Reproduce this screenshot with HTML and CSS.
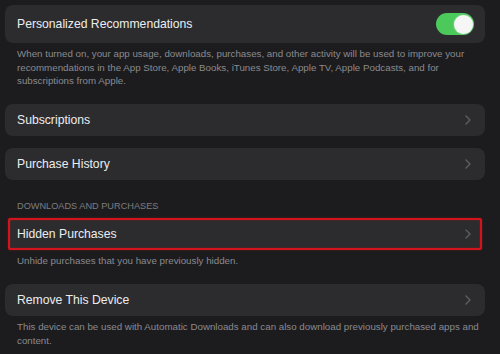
FILE: index.html
```html
<!DOCTYPE html>
<html>
<head>
<meta charset="utf-8">
<link rel="stylesheet" href="styles.css">
</head>
<body>
<div class="page">
  <div class="card tall">
    <span class="label">Personalized Recommendations</span>
    <span class="toggle"><span class="knob"></span></span>
  </div>
  <p class="footer">When turned on, your app usage, downloads, purchases, and other activity will be used to improve your recommendations in the App Store, Apple Books, iTunes Store, Apple TV, Apple Podcasts, and for subscriptions from Apple.</p>

  <div class="card gap-lg">
    <span class="label">Subscriptions</span>
    <svg class="chev" viewBox="0 0 6 10" width="6" height="10"><path d="M1 1l4 4-4 4" fill="none" stroke="currentColor" stroke-width="1.4" stroke-linecap="round" stroke-linejoin="round"/></svg>
  </div>

  <div class="card gap-md">
    <span class="label">Purchase History</span>
    <svg class="chev" viewBox="0 0 6 10" width="6" height="10"><path d="M1 1l4 4-4 4" fill="none" stroke="currentColor" stroke-width="1.4" stroke-linecap="round" stroke-linejoin="round"/></svg>
  </div>

  <p class="header">DOWNLOADS AND PURCHASES</p>
  <div class="card highlight">
    <span class="label">Hidden Purchases</span>
    <svg class="chev" viewBox="0 0 6 10" width="6" height="10"><path d="M1 1l4 4-4 4" fill="none" stroke="currentColor" stroke-width="1.4" stroke-linecap="round" stroke-linejoin="round"/></svg>
  </div>
  <p class="footer">Unhide purchases that you have previously hidden.</p>

  <div class="card gap-lg2">
    <span class="label">Remove This Device</span>
    <svg class="chev" viewBox="0 0 6 10" width="6" height="10"><path d="M1 1l4 4-4 4" fill="none" stroke="currentColor" stroke-width="1.4" stroke-linecap="round" stroke-linejoin="round"/></svg>
  </div>
  <p class="footer">This device can be used with Automatic Downloads and can also download previously purchased apps and content.</p>
</div>
</body>
</html>
```
FILE: styles.css
```css
html, body {
  margin: 0;
  padding: 0;
  background: #1c1c1e;
}
body {
  width: 500px;
  height: 354px;
  overflow: hidden;
  font-family: "Liberation Sans", Arial, sans-serif;
}
.page {
  padding: 5px 15px 0 5px;
}
.card {
  background: #2c2c2e;
  border-radius: 8px;
  height: 32px;
  display: flex;
  align-items: center;
  justify-content: space-between;
  padding: 0 14px 0 12px;
  box-sizing: border-box;
}
.card.tall {
  height: 38px;
  padding-right: 11px;
}
.label {
  color: #ececee;
  font-size: 12.2px;
}
.chev {
  color: #5d5d62;
}
.toggle {
  width: 38px;
  height: 22px;
  border-radius: 11px;
  background: #4cc95b;
  position: relative;
  display: block;
}
.knob {
  position: absolute;
  right: 1.5px;
  top: 1.5px;
  width: 19px;
  height: 19px;
  border-radius: 50%;
  background: #f6f6f6;
  box-shadow: 0 0 2px rgba(255, 255, 255, 0.6);
}
.footer {
  margin: 4px 0 0;
  padding: 0 0 0 12px;
  color: #8a8a8f;
  font-size: 9.75px;
  line-height: 13.5px;
}
.gap-lg { margin-top: 16px; }
.gap-md { margin-top: 12px; }
.gap-lg2 { margin-top: 17px; }
.header {
  margin: 20px 0 0;
  padding-left: 12px;
  color: #7c7c80;
  font-size: 9.2px;
  line-height: 13px;
}
.card.highlight {
  margin: 5px 3px 0;
  padding: 0 9px 0 7px;
  border: 2px solid #d1141e;
  border-radius: 2px;
  box-shadow: 0 0 2px rgba(209, 20, 30, 0.5), inset 0 0 2px rgba(209, 20, 30, 0.5);
}
```
